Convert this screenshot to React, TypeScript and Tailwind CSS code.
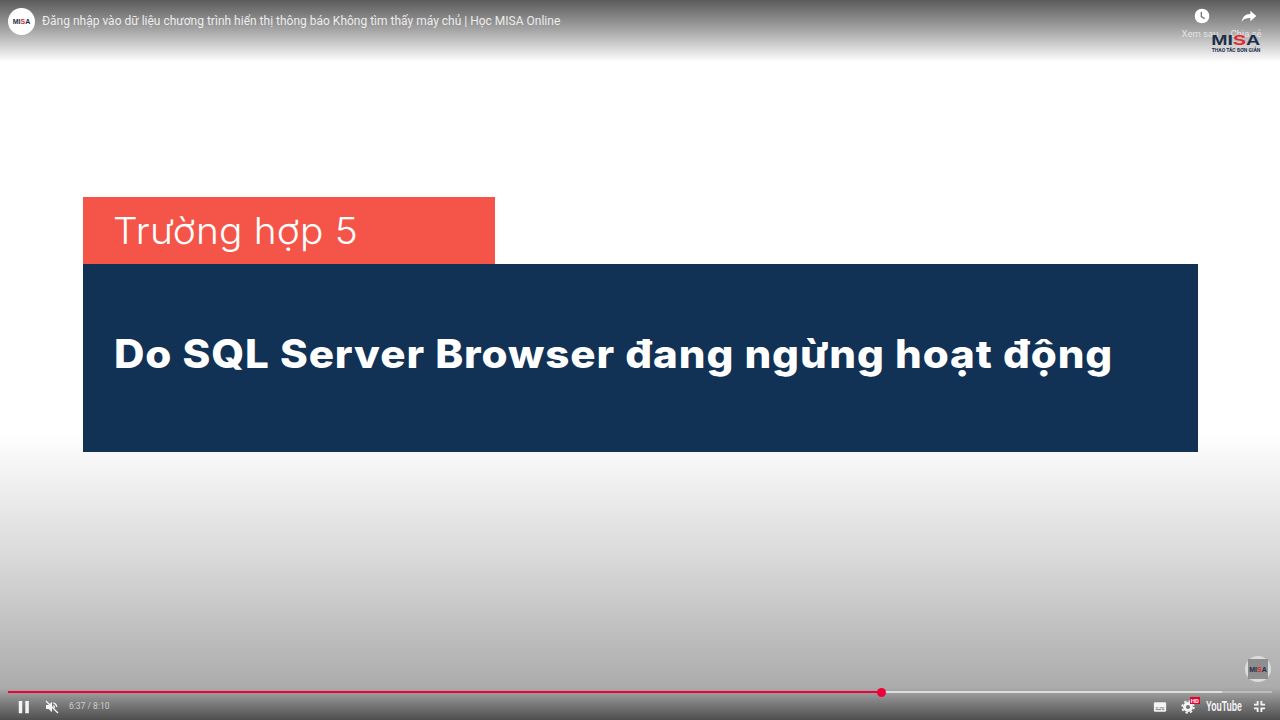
import React from 'react';

const MisaMark = ({ className }: { className: string }) => (
  <span className={`font-black leading-none text-[#1b2f4b] [font-family:'Liberation_Sans',sans-serif] ${className}`}>
    MI<span className="text-[#e0282e]">S</span>A
  </span>
);

const App: React.FC = () => {
  return (
    <div className="relative h-[720px] w-[1280px] overflow-hidden bg-white [font-family:Roboto,'Liberation_Sans',sans-serif]">
      {/* video frame */}
      <div className="flex h-full flex-col bg-gradient-to-b from-white from-[60%] via-[#d8d8d8] via-[78%] to-[#a0a0a0] pt-[197px] pl-[83px]">
        <div className="flex h-[67px] w-[412px] items-center bg-[#f55549] pl-[30px] text-[37px] font-light tracking-[0.2px] text-white [font-family:Inter,sans-serif]">
          <span className="origin-left [transform:scaleX(1.05)]">Trường hợp 5</span>
        </div>
        <div className="flex h-[188px] w-[1115px] items-center bg-[#113155] pb-[7px] pl-[31px]">
          <h1 className="origin-left text-[39px] font-extrabold tracking-[0.85px] whitespace-nowrap text-white [font-family:Inter,sans-serif] [transform:scaleX(1.08)]">
            Do SQL Server Browser đang ngừng hoạt động
          </h1>
        </div>
      </div>

      {/* top chrome */}
      <div className="absolute inset-x-0 top-0 flex h-[62px] items-start justify-between bg-gradient-to-b from-[#5c5c5c] via-[#a8a8a8] via-[50%] to-transparent pr-[13px] pl-[8px]">
        <div className="flex items-center gap-[7px] pt-[8px]">
          <div className="flex h-[27px] w-[27px] items-center justify-center rounded-full bg-white">
            <MisaMark className="text-[7px]" />
          </div>
          <span className="pb-[1px] text-[12px] whitespace-nowrap text-[#ececec]">
            Đăng nhập vào dữ liệu chương trình hiển thị thông báo Không tìm thấy máy chủ | Học MISA Online
          </span>
        </div>
        <div className="relative flex gap-[11px] pt-[8px] text-[9.5px] text-[#e4e4e4]">
          <div className="flex w-[36px] flex-col items-center gap-[3px]">
            <svg viewBox="0 0 24 24" className="h-[16px] w-[16px]">
              <circle cx="12" cy="12" r="11" fill="#fff" />
              <path d="M11 6v7l5 3" fill="none" stroke="#777" strokeWidth="2" />
            </svg>
            <span className="pr-[4px] whitespace-nowrap">Xem sau</span>
          </div>
          <div className="flex w-[36px] flex-col items-center gap-[3px]">
            <svg viewBox="0 0 24 24" className="h-[16px] w-[16px]" fill="#fff">
              <path d="M14 4l9 8-9 8v-5C8 15 4 16 1 21c1-7 5-12 13-12z" />
            </svg>
            <span className="pr-[6px] whitespace-nowrap">Chia sẻ</span>
          </div>
          {/* channel watermark */}
          <div className="absolute top-[32px] right-[5px] flex w-[52px] flex-col items-center gap-[1px]">
            <MisaMark className="text-[15px] [transform:scaleX(1.3)]" />
            <span className="text-[5px] leading-[5px] font-bold whitespace-nowrap text-[#1b2f4b]">THAO TÁC ĐƠN GIẢN</span>
          </div>
        </div>
      </div>

      {/* bottom chrome */}
      <div className="absolute inset-x-0 bottom-0 flex h-[64px] flex-col justify-end bg-gradient-to-b from-transparent from-[50%] to-[#4f4f4f] px-[8px]">
        <div className="flex justify-end pr-[1px]">
          <div className="mb-[9px] flex h-[26px] w-[26px] items-center justify-center rounded-full bg-[#dcdcdc]">
            <div className="flex h-[20px] w-[20px] items-center justify-center bg-[#8e8e8e]">
              <MisaMark className="text-[7px]" />
            </div>
          </div>
        </div>
        <div className="relative h-[2px] w-full bg-white/30">
          <div className="absolute inset-y-0 left-0 w-[1214px] bg-white/50" />
          <div className="absolute inset-y-0 left-0 w-[873px] bg-[#f0003a]" />
          <div className="absolute top-[-3.500px] left-[869px] h-[9px] w-[9px] rounded-full bg-[#f0003a]" />
        </div>
        <div className="flex h-[27px] items-center text-[#eeeeee]">
          <svg viewBox="0 0 16 16" className="ml-[9px] h-[14px] w-[14px]" fill="#f4f4f4">
            <path d="M2 1h4v14H2zM9.500 1h4v14h-4z" />
          </svg>
          <svg viewBox="0 0 24 24" className="ml-[13px] h-[16px] w-[16px]" fill="#f4f4f4">
            <path d="M3 9v6h4l5 5V4L7 9zM14 5v2c3 1 4 3 4 5h2c0-3-2-6-6-7zM14 9v6c1.500-.5 2.500-2 2.500-3S15.500 9.500 14 9z" />
            <path d="M3 3l18 18" stroke="#f4f4f4" strokeWidth="2" />
          </svg>
          <span className="ml-[9px] text-[8.5px] text-[#cfcfcf]">6:37 / 8:10</span>
          <div className="ml-auto flex items-center pr-[6px]">
            <svg viewBox="0 0 16 12" className="h-[12px] w-[14px]">
              <rect width="14" height="11" x="1" y="0.500" rx="1.500" fill="#f4f4f4" />
              <path d="M3 7h3M7.500 7H13M3 9h6M10 9h3" stroke="#777" strokeWidth="1" />
            </svg>
            <div className="relative ml-[14px] h-[14px] w-[14px]">
              <svg viewBox="0 0 24 24" className="h-[14px] w-[14px]" fill="none" stroke="#f4f4f4">
                <circle cx="12" cy="12" r="6" strokeWidth="5" />
                <circle cx="12" cy="12" r="10" strokeWidth="3" strokeDasharray="4 3.850" />
              </svg>
              <span className="absolute top-[-3px] right-[-5px] bg-[#e5002d] px-[1px] text-[6px] leading-[7px] font-bold text-white">HD</span>
            </div>
            <span className="ml-[11px] inline-block w-[36px] origin-left text-[15px] font-bold whitespace-nowrap text-[#f4f4f4] [font-family:'Liberation_Sans',sans-serif] [transform:scaleX(0.58)]">
              YouTube
            </span>
            <svg viewBox="0 0 14 14" className="ml-[11px] h-[13px] w-[13px]" fill="none" stroke="#f4f4f4" strokeWidth="2">
              <path d="M1 5h4V1M9 1v4h4M13 9H9v4M5 13V9H1" />
            </svg>
          </div>
        </div>
      </div>
    </div>
  );
};

export default App;
